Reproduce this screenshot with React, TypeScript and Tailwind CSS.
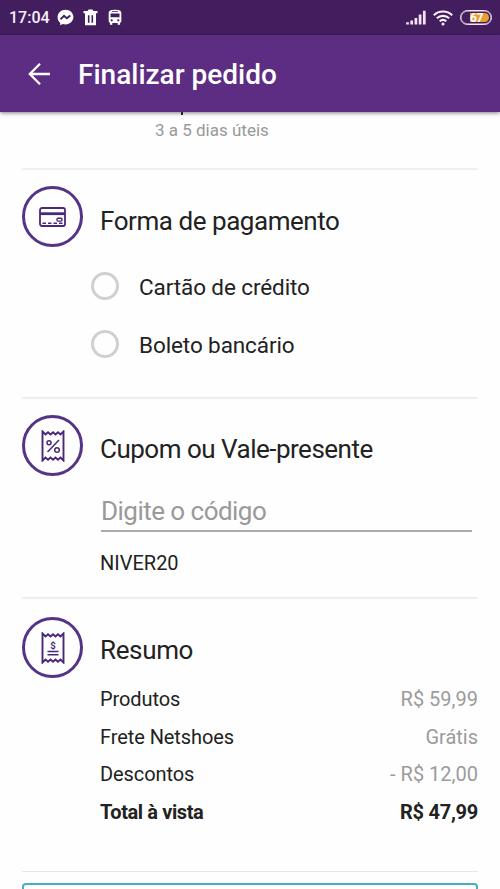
import type { ReactNode } from "react";

function StatusBar() {
  return (
    <div className="flex h-[35px] items-center bg-[#421e5e] pl-[9px] pr-2 text-[#fbeffc]">
      <span className="w-[40px] whitespace-nowrap text-[16px] font-medium leading-[34px]">17:04</span>
      <svg className="ml-[8px] h-[17px] w-[17px]" viewBox="0 0 17 17">
        <path d="M8.5.8C4 .8.6 4 .6 8.2c0 2.3 1 4.200 2.600 5.500v2.500l2.500-1.200c.9.3 1.800.4 2.800.4 4.500 0 7.900-3.200 7.900-7.300S13 .8 8.500.8z" fill="#fff" />
        <path d="M3.500 10.300 7 6.800l2.800 2.500 3.500-2.700" fill="none" stroke="#421e5e" strokeWidth="1.900" />
      </svg>
      <svg className="ml-[9px] h-[17px] w-[15px]" viewBox="0 0 15 17">
        <path d="M.5 2h4L5.500.6h4L10.500 2h4v2.300H.500zM2 4.300h11v11.900H2z" fill="#fff" />
        <path d="M5.700 6.200v7.500M9.300 6.200v7.500" stroke="#421e5e" strokeWidth="1.600" />
      </svg>
      <svg className="ml-[10px] h-[17px] w-[14px]" viewBox="0 0 14 17">
        <path d="M.7 4C.7 1.500 3.500.8 7 .8s6.300.7 6.300 3.200v8.700l-1.200 1v2H9.700v-1.700H4.300v1.700H1.900v-2l-1.200-1z" fill="#fff" />
        <path d="M2.500 4.500h9v3.800h-9zM4 2.300h6v.8H4z" fill="#421e5e" />
        <circle cx="3.700" cy="11.300" r="1.100" fill="#421e5e" />
        <circle cx="10.300" cy="11.300" r="1.100" fill="#421e5e" />
      </svg>
      <svg className="ml-auto h-[15px] w-[20px]" viewBox="0 0 20 15">
        <path d="M1.500 14.500v-2.300M5.700 14.500v-4M9.900 14.500V8M14.100 14.500V4.500M18.300 14.500V.8" stroke="#f6e3f7" strokeWidth="2.700" />
      </svg>
      <svg className="ml-[7px] h-[16px] w-[20px]" viewBox="0 0 20 16" fill="none" stroke="#fbeffc" strokeWidth="2.100">
        <path d="M.8 5.300c5-5 13.400-5 18.400 0M3.800 8.300c3.500-3.300 8.900-3.300 12.400 0M6.700 11.300c2-1.800 4.600-1.800 6.600 0" />
        <circle cx="10" cy="14" r="1.500" fill="#fbeffc" stroke="none" />
      </svg>
      <div className="ml-[7px] flex h-[15px] w-[32px] rounded-full border border-[#f6e3f7] p-px ring-[0.500px] ring-inset ring-[#f6e3f7]">
        <div className="my-px ml-[8px] mr-px flex flex-1 items-center rounded-r-full bg-[#e8a030]">
          <span className="text-[12px] font-bold leading-[10px] tracking-[-0.500px] text-white">67</span>
        </div>
      </div>
    </div>
  );
}

function Section({ icon, title, titleClass, className, children }: { icon: ReactNode; title: string; titleClass: string; className: string; children: ReactNode }) {
  return (
    <section className={`mx-[22px] border-t-2 border-[#efefef] ${className}`}>
      <div className="flex h-[61px] items-center">
        <div className="flex h-[61px] w-[61px] items-center justify-center rounded-full border-3 border-[#553386] text-[#4a2878]">
          {icon}
        </div>
        <h2 className={`ml-[17px] whitespace-nowrap text-[26px] leading-[30px] ${titleClass}`}>{title}</h2>
      </div>
      {children}
    </section>
  );
}

function CardIcon() {
  return (
    <svg className="h-[20px] w-[27px]" viewBox="0 0 27 20" fill="none" stroke="currentColor">
      <rect x="1" y="1" width="25" height="18" rx="2" strokeWidth="1.800" />
      <path d="M1 6.700h25" strokeWidth="2.800" />
      <rect x="18" y="11.300" width="5" height="2.800" rx="1" strokeWidth="1.400" />
      <path d="M3.500 16.300h20" strokeWidth="1.400" strokeDasharray="3.500 2" />
    </svg>
  );
}

function TicketIcon({ children }: { children: ReactNode }) {
  return (
    <svg className="h-[32px] w-[24px]" viewBox="0 0 24 32" fill="none" stroke="currentColor" strokeWidth="1.900">
      <path d="M1.500 1.500 4.500 4.500 7 2.200 9.500 4.500 12 2.200 14.500 4.500 17 2.200 19.500 4.500 22.500 1.500V30.500L19.500 27.500 17 29.800 14.500 27.500 12 29.800 9.500 27.500 7 29.800 4.500 27.500 1.500 30.500z" />
      {children}
    </svg>
  );
}

function Option({ label }: { label: string }) {
  return (
    <label className="flex h-[58px] items-center">
      <span className="h-[28px] w-[28px] rounded-full border-3 border-[#d0d0d0]" />
      <span className="ml-[20px] mt-px text-[22.500px] leading-[28px] tracking-[-0.100px]">{label}</span>
    </label>
  );
}

const rows = [
  ["Produtos", "R$ 59,99"],
  ["Frete Netshoes", "Grátis"],
  ["Descontos", "- R$ 12,00"],
];

export default function App() {
  return (
    <div className="h-[889px] w-[500px] overflow-hidden bg-[#fefefe] font-[Roboto,sans-serif] text-[#222]">
      <StatusBar />
      <header className="flex h-[77px] items-center bg-[#5c2d82] text-white shadow-[0_1px_4px_rgba(0,0,0,0.5)]">
        <svg className="ml-[28px] mt-px h-[22px] w-[22px]" viewBox="0 0 22 22" fill="none" stroke="currentColor" strokeWidth="2.300">
          <path d="M22 11H1.800M12 .800 1.800 11 12 21.200" />
        </svg>
        <h1 className="ml-[28px] mt-[2px] whitespace-nowrap text-[28px] font-medium leading-[34px]">Finalizar pedido</h1>
      </header>

      <div className="h-[56px] pl-[155px]">
        <div className="ml-[26px] h-[3px] w-[2px] bg-[#222]" />
        <p className="mt-[5px] text-[17px] leading-[20px] text-[#999]">3 a 5 dias úteis</p>
      </div>

      <Section className="h-[229px] pt-[16px]" title="Forma de pagamento" titleClass="mt-[8px] tracking-[-0.450px]" icon={<CardIcon />}>
        <div className="ml-[69px] mt-[10px]">
          <Option label="Cartão de crédito" />
          <Option label="Boleto bancário" />
        </div>
      </Section>

      <Section
        className="h-[200px] pt-[16px]"
        title="Cupom ou Vale-presente"
        titleClass="mt-[7px] tracking-[-0.500px]"
        icon={
          <TicketIcon>
            <path d="M18 10 6.500 22" strokeWidth="1.500" />
            <circle cx="8" cy="12.700" r="2" strokeWidth="1.500" />
            <circle cx="16" cy="20" r="2.300" strokeWidth="1.500" />
          </TicketIcon>
        }
      >
        <div className="ml-[79px] mr-[6px] mt-[17px] h-[39px] border-b-2 border-[#aaa] text-[26px] leading-[36px] tracking-[-0.530px] text-[#999]">
          Digite o código
        </div>
        <p className="ml-[78px] mt-[19px] text-[20px] leading-[24px]">NIVER20</p>
      </Section>

      <Section
        className="h-[274px] pt-[18px]"
        title="Resumo"
        titleClass="mt-[4px] tracking-[-0.350px]"
        icon={
          <TicketIcon>
            <text x="12" y="16.500" textAnchor="middle" fontSize="9.500" fill="currentColor" stroke="none" fontWeight="700">$</text>
            <path d="M6.500 19.500h11M6.500 22.700h11" strokeWidth="1.400" />
          </TicketIcon>
        }
      >
        <dl className="ml-[78px] mt-[3px] text-[20px] leading-[37.500px]">
          {rows.map(([label, value]) => (
            <div key={label} className="flex justify-between">
              <dt className="tracking-[-0.080px]">{label}</dt>
              <dd className="text-[#9b9b9b]">{value}</dd>
            </div>
          ))}
          <div className="flex justify-between font-bold">
            <dt className="tracking-[-0.400px]">Total à vista</dt>
            <dd className="tracking-[-0.250px]">R$ 47,99</dd>
          </div>
        </dl>
      </Section>

      <div className="mx-[22px] h-[18px] border-t border-[#e6e6e6] pt-[11px]">
        <div className="h-[50px] rounded-[4px] border-2 border-[#45afc0]" />
      </div>
    </div>
  );
}
